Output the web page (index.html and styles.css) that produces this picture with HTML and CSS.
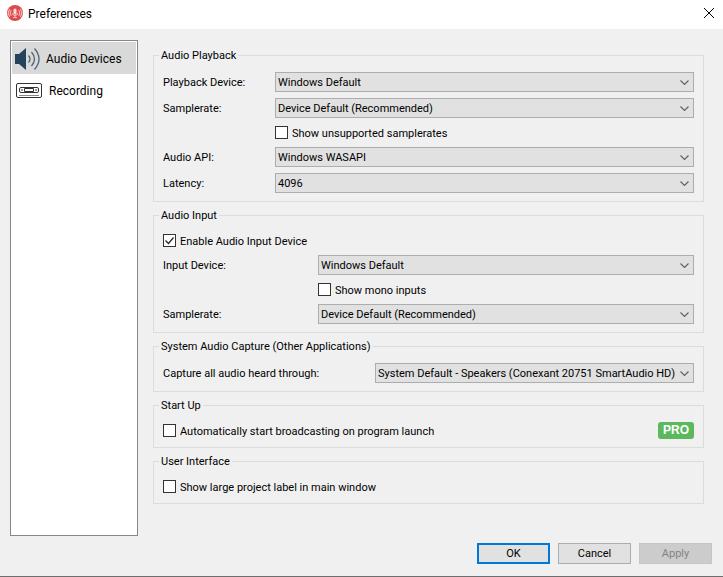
FILE: index.html
```html
<!DOCTYPE html>
<html lang="en">
<head>
    <meta charset="UTF-8">
    <meta name="viewport" content="width=device-width, initial-scale=1.0">
    <title>Preferences</title>
    <link rel="stylesheet" href="styles.css">
</head>
<body>
    <header class="titlebar">
        <svg class="app-icon" width="16" height="16" viewBox="0 0 16 16" fill="none" stroke="#fbdcdc">
            <circle cx="8" cy="8" r="8" fill="#dd4b4b" stroke="none"/>
            <rect x="6.5" y="3.5" width="3" height="6" rx="1.5" fill="#fbdcdc" stroke="none"/>
            <path d="M5.5 8a2.5 2.5 0 0 0 5 0M8 10.5v2M6 12.5h4" stroke-width=".8"/>
            <path d="M4.2 5.2a4.5 4.5 0 0 0 0 5.6M2.5 4.2a6.5 6.5 0 0 0 0 7.6M11.8 5.2a4.5 4.5 0 0 1 0 5.6M13.5 4.2a6.5 6.5 0 0 1 0 7.6" stroke-width=".9"/>
        </svg>
        <h1>Preferences</h1>
        <button type="button" class="close" aria-label="Close">
            <svg width="10" height="10" viewBox="0 0 10 10" stroke="#000"><path d="M0 0l10 10M10 0L0 10"/></svg>
        </button>
    </header>

    <main class="main">
        <nav class="sidebar">
            <button type="button" class="nav-item active">
                <svg width="28" height="24" viewBox="0 0 28 24" fill="none">
                    <path d="M1 7h4l7-6v22l-7-6H1z" fill="#24425c"/>
                    <path d="M14.5 8.500q3 3.500 0 7M17.500 5q6 7 0 14M20.500 1.500q9 10.500 0 21" stroke="#4d6478" stroke-width="1.300"/>
                </svg>
                Audio Devices
            </button>
            <button type="button" class="nav-item">
                <svg width="31" height="16" viewBox="0 0 31 16" fill="none" stroke="#333">
                    <rect x="2.500" y=".5" width="25" height="14" rx="1.500"/>
                    <path d="M5 12.500h20" stroke="#888"/>
                    <rect x="5.500" y="4.500" width="19" height="5" rx="1.500"/>
                    <path d="M10.500 5.500h9v3h-9zM7 7h2M21 7h2"/>
                </svg>
                Recording
            </button>
        </nav>

        <form class="panel">
            <fieldset>
                <legend>Audio Playback</legend>
                <div class="fields playback">
                    <label for="playbackDevice">Playback Device:</label>
                    <select id="playbackDevice"><option>Windows Default</option></select>
                    <label for="playbackRate">Samplerate:</label>
                    <select id="playbackRate"><option>Device Default (Recommended)</option></select>
                    <label class="check offset"><input type="checkbox">Show unsupported samplerates</label>
                    <label for="audioApi">Audio API:</label>
                    <select id="audioApi"><option>Windows WASAPI</option></select>
                    <label for="latency">Latency:</label>
                    <select id="latency"><option>4096</option></select>
                </div>
            </fieldset>

            <fieldset>
                <legend>Audio Input</legend>
                <div class="fields input">
                    <label class="check full"><input type="checkbox" checked>Enable Audio Input Device</label>
                    <label for="inputDevice">Input Device:</label>
                    <select id="inputDevice"><option>Windows Default</option></select>
                    <label class="check offset"><input type="checkbox">Show mono inputs</label>
                    <label for="inputRate">Samplerate:</label>
                    <select id="inputRate"><option>Device Default (Recommended)</option></select>
                </div>
            </fieldset>

            <fieldset>
                <legend>System Audio Capture (Other Applications)</legend>
                <div class="fields capture">
                    <label for="captureDevice">Capture all audio heard through:</label>
                    <select id="captureDevice"><option>System Default - Speakers (Conexant 20751 SmartAudio HD)</option></select>
                </div>
            </fieldset>

            <fieldset>
                <legend>Start Up</legend>
                <div class="row">
                    <label class="check"><input type="checkbox">Automatically start broadcasting on program launch</label>
                    <span class="pro">PRO</span>
                </div>
            </fieldset>

            <fieldset>
                <legend>User Interface</legend>
                <div class="row">
                    <label class="check"><input type="checkbox">Show large project label in main window</label>
                </div>
            </fieldset>
        </form>
    </main>

    <footer class="actions">
        <button type="button" class="btn default">OK</button>
        <button type="button" class="btn">Cancel</button>
        <button type="button" class="btn" disabled>Apply</button>
    </footer>
</body>
</html>
```
FILE: styles.css
```css
* {
    box-sizing: border-box;
}

body {
    display: flex;
    flex-direction: column;
    min-height: 100vh;
    margin: 0;
    background: #f0f0f0;
    color: #000;
    font: 11px/14px Roboto, Tahoma, sans-serif;
}

button,
select {
    font: inherit;
    color: inherit;
}

.titlebar {
    display: flex;
    align-items: center;
    height: 29px;
    padding: 0 9px 3px 7px;
    background: #fff;
}

.titlebar h1 {
    flex: 1;
    margin: 0 0 0 5px;
    padding-top: 2px;
    font-size: 12px;
    font-weight: normal;
    line-height: 16px;
}

.close {
    display: flex;
    padding: 0;
    border: none;
    background: none;
}

.main {
    display: flex;
    flex: 1;
    gap: 15px;
    padding: 11px 19px 0 10px;
}

.sidebar {
    flex: none;
    width: 128px;
    padding: 1px;
    border: 1px solid #828790;
    background: #fff;
}

.nav-item {
    display: flex;
    align-items: center;
    gap: 4px;
    width: 100%;
    height: 32px;
    padding: 2px 2px 0;
    border: none;
    background: none;
    font-size: 12px;
    white-space: nowrap;
}

.nav-item.active {
    background: #d9d9d9;
}

.panel {
    flex: 1;
    padding-top: 8px;
}

fieldset {
    min-width: 0;
    margin: 0 0 6px;
    padding: 10px 9px 8px;
    border: 1px solid #dcdcdc;
}

legend {
    height: 14px;
    margin-left: -4px;
    padding: 0 2px;
    line-height: 16px;
}

label {
    padding-top: 2px;
}

.fields {
    display: grid;
    align-items: center;
    row-gap: 6px;
}

.playback {
    grid-template-columns: 112px 1fr;
}

.input {
    grid-template-columns: 155px 1fr;
}

.capture {
    grid-template-columns: 212px 1fr;
}

.offset {
    grid-column: 2;
}

.full {
    grid-column: 1 / -1;
}

.row {
    display: flex;
    align-items: center;
    justify-content: space-between;
}

.check {
    display: flex;
    align-items: flex-start;
    gap: 4px;
    height: 17px;
    line-height: 15px;
}

input[type="checkbox"] {
    appearance: none;
    width: 13px;
    height: 13px;
    margin: 0;
    border: 1px solid #333;
    background: #fff;
}

input[type="checkbox"]:checked {
    background: #fff url("data:image/svg+xml,%3Csvg xmlns='http://www.w3.org/2000/svg' width='11' height='11' fill='none' stroke='%23222' stroke-width='1.2'%3E%3Cpath d='M1.5 5.500l3 3 5-6'/%3E%3C/svg%3E") no-repeat center;
}

select {
    appearance: none;
    width: 100%;
    min-width: 0;
    height: 20px;
    padding: 2px 16px 0 2px;
    border: 1px solid #adadad;
    border-radius: 0;
    background: #e1e1e1 url("data:image/svg+xml,%3Csvg xmlns='http://www.w3.org/2000/svg' width='9' height='5' fill='none' stroke='%23606060' stroke-width='1.1'%3E%3Cpath d='M.5 .5l4 4 4-4'/%3E%3C/svg%3E") no-repeat right 4px bottom 6px;
}

.pro {
    width: 36px;
    border-radius: 3px;
    background: #5cb85c;
    color: #fff;
    font: bold 12px/17px "Liberation Sans", Arial, sans-serif;
    text-align: center;
}

.actions {
    display: flex;
    justify-content: flex-end;
    gap: 8px;
    padding: 7px 11px 12px;
    border-bottom: 1px solid #6e6e6e;
}

.btn {
    width: 73px;
    height: 21px;
    padding: 1px 0 0;
    border: 1px solid #adadad;
    background: #e1e1e1;
}

.btn.default {
    border: 2px solid #0078d7;
}

.btn:disabled {
    border: 1px dotted #bfbfbf;
    background: #ccc;
    color: #838383;
}
```
